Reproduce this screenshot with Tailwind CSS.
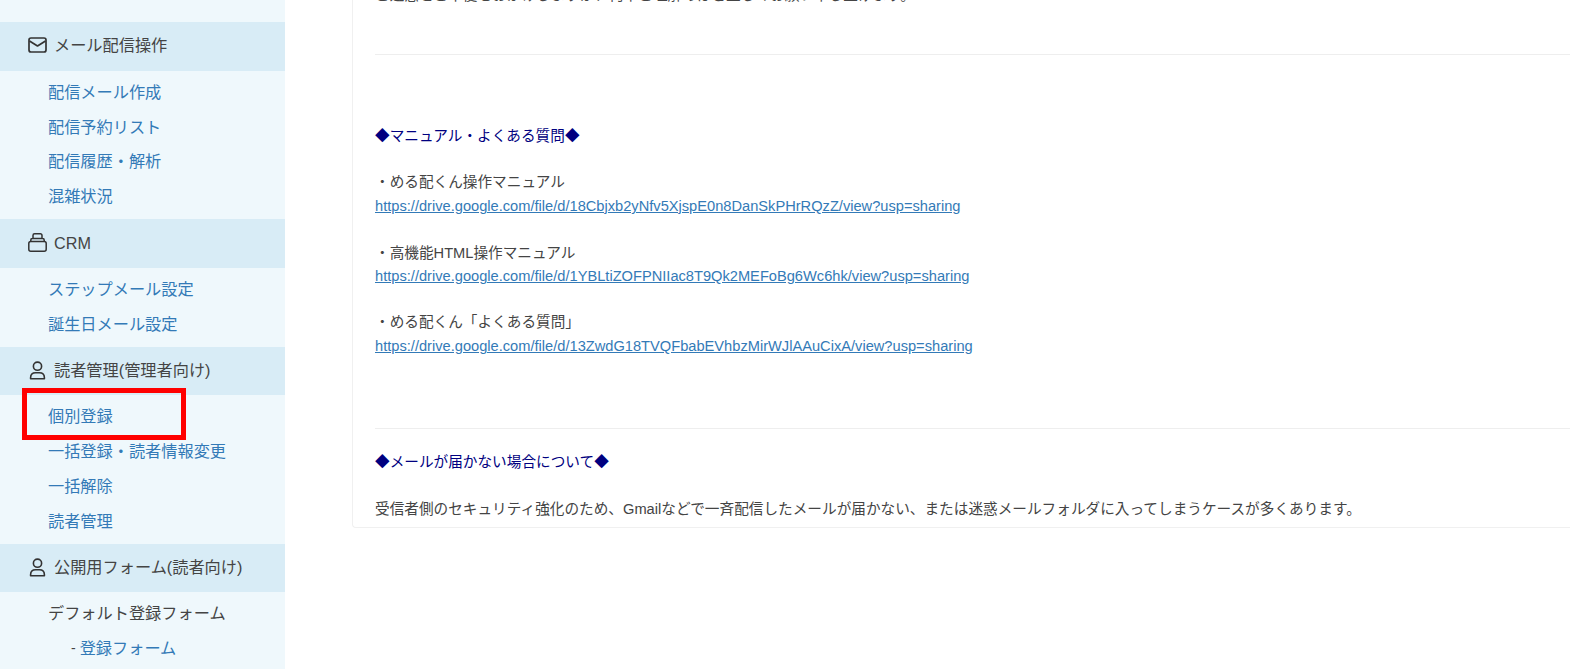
<!DOCTYPE html>
<html lang="ja">
<head>
<meta charset="UTF-8">
<title>める配くん</title>
<script src="https://cdn.jsdelivr.net/npm/@tailwindcss/browser@4"></script>
</head>
<body class="bg-white h-[669px] overflow-hidden flex font-['Liberation_Sans','Noto_Sans_CJK_JP',sans-serif]">

<!-- sidebar -->
<aside class="w-[285px] h-[669px] shrink-0 overflow-hidden bg-[#eff8fc] pt-[22px] text-[16.2px] leading-[24px]">
	<div class="h-[49px] bg-[#d8ecf6] flex items-center pl-[28px] pb-[4px] text-[#444]">
		<svg class="w-[19px] h-[16px] mr-[7px]" viewBox="0 0 19 16" fill="none" stroke="#333" stroke-width="1.7" stroke-linejoin="round"><rect x="1" y="1" width="17" height="14" rx="2"/><path d="M1.5 4l8 5 8-5"/></svg>
		メール配信操作
	</div>
	<ul class="pt-[3px] pb-[6px] pl-[48px] text-[#337ab7]">
		<li class="h-[35px] flex items-center">配信メール作成</li>
		<li class="h-[35px] flex items-center">配信予約リスト</li>
		<li class="h-[34px] flex items-center">配信履歴・解析</li>
		<li class="h-[35px] flex items-center">混雑状況</li>
	</ul>
	<div class="h-[49px] bg-[#d8ecf6] flex items-center pl-[28px] pb-[2px] text-[#444]">
		<svg class="w-[19px] h-[19px] mr-[7px]" viewBox="0 0 19 19" fill="none" stroke="#333" stroke-width="1.5" stroke-linejoin="round"><rect x="0.8" y="8.5" width="17.4" height="9.7" rx="2"/><path d="M2.8 8.5V7a1.6 1.6 0 0 1 1.6-1.6h10.2a1.6 1.6 0 0 1 1.6 1.6v1.5M5 5.4V2.4a1.6 1.6 0 0 1 1.6-1.6h5.8a1.6 1.6 0 0 1 1.6 1.6v3"/></svg>
		CRM
	</div>
	<ul class="pt-[3px] pb-[6px] pl-[48px] text-[#337ab7]">
		<li class="h-[35px] flex items-center">ステップメール設定</li>
		<li class="h-[35px] flex items-center">誕生日メール設定</li>
	</ul>
	<div class="h-[48px] bg-[#d8ecf6] flex items-center pl-[28px] pb-[2px] text-[#444]">
		<svg class="w-[19px] h-[19px] mr-[7px]" viewBox="0 0 19 19" fill="none" stroke="#333" stroke-width="1.6" stroke-linejoin="round"><circle cx="9.5" cy="5.2" r="4.1"/><path d="M2.6 17.8v-1c0-3 2-5 5-5h3.8c3 0 5 2 5 5v1z"/></svg>
		読者管理(管理者向け)
	</div>
	<div class="relative">
		<ul class="pt-[3px] pb-[6px] pl-[48px] text-[#337ab7]">
			<li class="h-[35px] flex items-center">個別登録</li>
			<li class="h-[35px] flex items-center">一括登録・読者情報変更</li>
			<li class="h-[35px] flex items-center">一括解除</li>
			<li class="h-[35px] flex items-center">読者管理</li>
		</ul>
		<div class="absolute left-[22px] top-[-7px] w-[164px] h-[52px] border-[5px] border-[#ff0000]"></div>
	</div>
	<div class="h-[48px] bg-[#d8ecf6] flex items-center pl-[28px] pb-[2px] text-[#444]">
		<svg class="w-[19px] h-[19px] mr-[7px]" viewBox="0 0 19 19" fill="none" stroke="#333" stroke-width="1.6" stroke-linejoin="round"><circle cx="9.5" cy="5.2" r="4.1"/><path d="M2.6 17.8v-1c0-3 2-5 5-5h3.8c3 0 5 2 5 5v1z"/></svg>
		公開用フォーム(読者向け)
	</div>
	<ul class="pt-[3px] pl-[48px]">
		<li class="h-[35px] flex items-center text-[#444]">デフォルト登録フォーム</li>
		<li class="h-[35px] flex items-center pl-[23px] text-[#444]"><span class="text-[14px] mr-[4px]">-</span><span class="text-[#337ab7]">登録フォーム</span></li>
	</ul>
</aside>

<!-- message panel -->
<main class="flex-1 min-w-0 overflow-hidden">
	<div class="ml-[67px] h-[528px] border-l border-b border-[#f0f0f0] rounded-bl-[4px] pl-[22px] overflow-hidden text-[14.65px] leading-[20px] text-[#444]">
		<p class="mt-[-15px] h-[20px] whitespace-nowrap">ご迷惑とご不便をおかけしますが、何卒ご理解のほど宜しくお願い申し上げます。</p>
		<hr class="mt-[49px] border-t border-[#eeeeee]">
		<p class="mt-[71px] text-[#000080]">◆マニュアル・よくある質問◆</p>
		<p class="mt-[26px]">・める配くん操作マニュアル</p>
		<p class="mt-[4px]"><a class="text-[#337ab7] underline">https://drive.google.com/file/d/18Cbjxb2yNfv5XjspE0n8DanSkPHrRQzZ/view?usp=sharing</a></p>
		<p class="mt-[27px]">・高機能HTML操作マニュアル</p>
		<p class="mt-[3px]"><a class="text-[#337ab7] underline">https://drive.google.com/file/d/1YBLtiZOFPNIIac8T9Qk2MEFoBg6Wc6hk/view?usp=sharing</a></p>
		<p class="mt-[26px]">・める配くん「よくある質問」</p>
		<p class="mt-[4px]"><a class="text-[#337ab7] underline">https://drive.google.com/file/d/13ZwdG18TVQFbabEVhbzMirWJlAAuCixA/view?usp=sharing</a></p>
		<hr class="mt-[72px] border-t border-[#eeeeee]">
		<p class="mt-[23px] text-[#000080]">◆メールが届かない場合について◆</p>
		<p class="mt-[27px] whitespace-nowrap">受信者側のセキュリティ強化のため、Gmailなどで一斉配信したメールが届かない、または迷惑メールフォルダに入ってしまうケースが多くあります。</p>
	</div>
</main>
</body>
</html>
